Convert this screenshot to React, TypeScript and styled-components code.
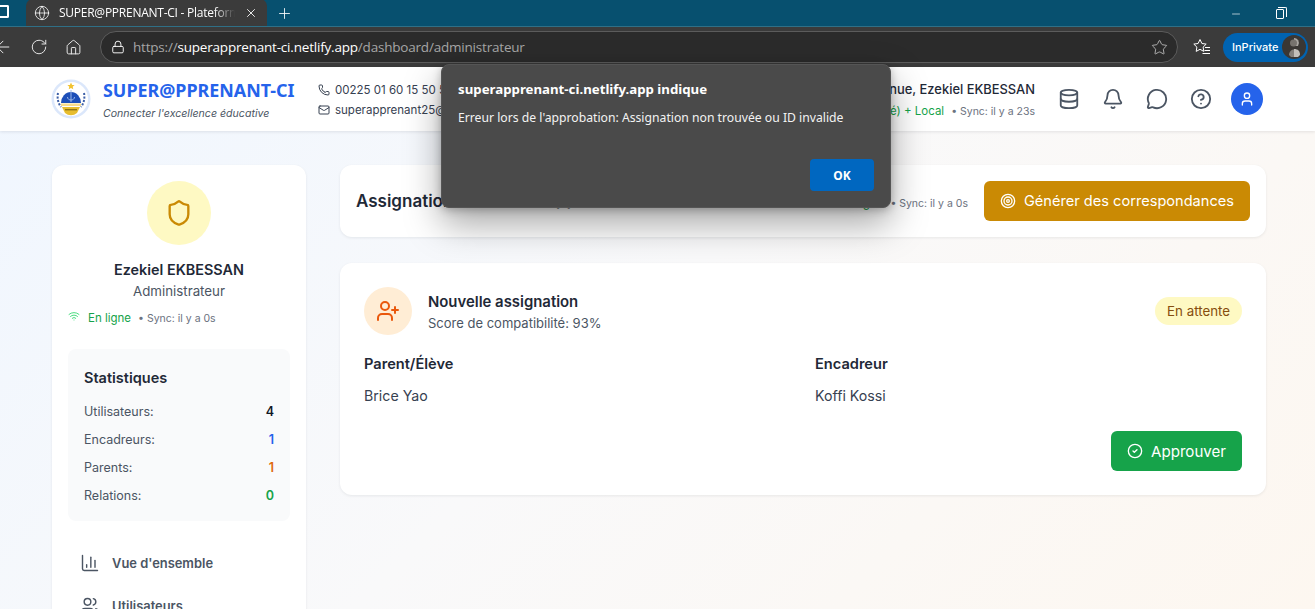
import styled, { createGlobalStyle } from "styled-components";
import {
  ArrowLeft,
  Bell,
  ChartColumn,
  CircleCheck,
  CircleHelp,
  Database,
  Globe,
  House,
  Lock,
  Mail,
  MessageCircle,
  Minus,
  Phone,
  Plus,
  RotateCw,
  Shield,
  Star,
  Target,
  User,
  UserPlus,
  Users,
  Wifi,
  X,
} from "lucide-react";

const GlobalStyle = createGlobalStyle`
  html, body {
    margin: 0;
    height: 100%;
    overflow: hidden;
  }
  * { box-sizing: border-box; }
  body {
    font-family: Inter, "Noto Sans", sans-serif;
    color: #1f2937;
  }
`;

const Screen = styled.div`
  position: relative;
  width: 1315px;
  height: 609px;
  overflow: hidden;
  display: flex;
  flex-direction: column;
  background: linear-gradient(135deg, #eff6ff 0%, #f9f9fa 50%, #fdf7f0 100%);
`;

/* browser chrome */
const TabStrip = styled.div`
  height: 27px;
  flex: none;
  display: flex;
  align-items: flex-end;
  background: #07506f;
  color: #fff;
  border-bottom: 1px solid #2f6f86;
`;

const WindowIcon = styled.div`
  width: 9px;
  height: 13px;
  margin-top: -3px;
  align-self: center;
  border: 2px solid #fff;
  border-left: none;
  border-radius: 0 2px 2px 0;
`;

const Tab = styled.div`
  width: 241px;
  height: 27px;
  margin-left: 17px;
  padding: 0 9px 0 8px;
  display: flex;
  align-items: center;
  gap: 9px;
  background: #3b3b3b;
  border-radius: 7px 7px 0 0;
  font-size: 12px;
  white-space: nowrap;
`;

const TabTitle = styled.span`
  flex: 1;
  overflow: hidden;
  letter-spacing: -0.25px;
  font-family: "Open Sans", sans-serif;
  mask-image: linear-gradient(90deg, #000 88%, transparent);
`;

const NewTab = styled.div`
  margin: 0 0 4px 9px;
  display: flex;
`;

const WindowControls = styled.div`
  margin-left: auto;
  padding: 0 31px 6px 0;
  display: flex;
  align-items: center;
  gap: 34px;
`;

const RestoreIcon = styled.div`
  position: relative;
  width: 8px;
  height: 10px;
  border: 1px solid #fff;
  border-radius: 1px;

  &::after {
    content: "";
    position: absolute;
    top: -3px;
    left: 1px;
    width: 8px;
    height: 9px;
    border-top: 1px solid #fff;
    border-right: 1px solid #fff;
    border-radius: 0 2px 0 0;
  }
`;

const Toolbar = styled.div`
  height: 40px;
  flex: none;
  display: flex;
  align-items: center;
  background: #3b3b3b;
  color: #e8e8e8;
`;

const NavButtons = styled.div`
  width: 107px;
  margin-left: -7px;
  display: flex;
  align-items: center;
  gap: 17px;
`;

const AddressBar = styled.div`
  width: 1078px;
  height: 32px;
  padding: 0 9px 0 7px;
  display: flex;
  align-items: center;
  gap: 5px;
  background: #2b2b2b;
  border: 1px solid #5c5c5c;
  border-radius: 16px;
  font-size: 13.5px;
  color: #a6a6a6;
  font-family: "Open Sans", sans-serif;
  letter-spacing: -0.2px;
`;

const LockBadge = styled.div`
  width: 20px;
  display: flex;
  justify-content: center;
  flex: none;
`;

const Host = styled.span`
  color: #fff;
`;

const AddressText = styled.div`
  flex: 1;
  white-space: nowrap;
`;

const FavoritesIcon = styled.div`
  margin-left: 14px;
  display: flex;
`;

const InPrivate = styled.div`
  width: 85px;
  height: 29px;
  margin-left: 11px;
  padding: 0 2px 0 9px;
  display: flex;
  align-items: center;
  justify-content: space-between;
  background: #0063b1;
  border-radius: 15px;
  font-size: 11px;
  font-weight: 500;
  color: #fff;
`;

const Avatar = styled.div`
  width: 24px;
  height: 24px;
  border-radius: 50%;
  background: #3a3734;
  display: flex;
`;

/* site header */
const SiteHeader = styled.header`
  height: 64px;
  flex: none;
  padding: 0 52px 0 51px;
  display: flex;
  align-items: center;
  background: #fff;
  box-shadow: 0 1px 3px rgba(15, 23, 42, 0.1);
`;

const Brand = styled.div`
  width: 267px;
  display: flex;
  align-items: center;
  gap: 12px;
`;

const BrandName = styled.div`
  font-size: 17.9px;
  line-height: 24px;
  font-weight: 700;
  color: #2563eb;
  font-family: "Noto Sans", sans-serif;
  white-space: nowrap;
`;

const Tagline = styled.div`
  margin-top: 4px;
  font-size: 10.6px;
  line-height: 15px;
  font-style: italic;
  color: #4b5563;
`;

const Contacts = styled.div`
  padding-top: 2px;
  display: flex;
  flex-direction: column;
  gap: 4px;
  font-size: 11.5px;
  color: #374151;
  white-space: nowrap;
`;

const ContactRow = styled.div`
  display: flex;
  align-items: center;
  gap: 5px;
  line-height: 16px;
`;

const HeaderRight = styled.div`
  margin-left: auto;
  display: flex;
  align-items: center;
  gap: 23px;
`;

const Welcome = styled.div`
  padding-top: 3px;
  display: flex;
  flex-direction: column;
  gap: 3px;
  text-align: right;
  white-space: nowrap;
`;

const WelcomeName = styled.div`
  font-size: 12.9px;
  line-height: 16px;
  font-weight: 500;
  color: #1f2937;
`;

const WelcomeStatus = styled.div`
  line-height: 16px;
`;

const HeaderIcons = styled.div`
  display: flex;
  align-items: center;
  gap: 22px;
  color: #4b5563;
`;

const UserBubble = styled.div`
  width: 32px;
  height: 32px;
  margin-left: -3px;
  border-radius: 50%;
  background: #2563eb;
  color: #fff;
  display: flex;
  align-items: center;
  justify-content: center;
`;

const Online = styled.span`
  font-size: 11.5px;
  color: #16a34a;
`;

const SyncText = styled.span`
  margin-left: 7px;
  font-size: 10.5px;
  color: #6b7280;
`;

/* page */
const Content = styled.main`
  flex: 1;
  min-height: 0;
  padding: 34px 49px 0 52px;
  display: grid;
  grid-template-columns: 254px 1fr;
  gap: 34px;
  align-items: start;
`;

const Sidebar = styled.aside`
  height: 520px;
  padding: 16px;
  background: #fff;
  border-radius: 12px;
  box-shadow: 0 1px 3px rgba(15, 23, 42, 0.08);
`;

const Profile = styled.div`
  display: flex;
  flex-direction: column;
  align-items: center;
`;

const ShieldCircle = styled.div`
  width: 64px;
  height: 64px;
  border-radius: 50%;
  background: #fef9c3;
  color: #ca8a04;
  display: flex;
  align-items: center;
  justify-content: center;
`;

const ProfileName = styled.div`
  margin-top: 15px;
  font-size: 14.4px;
  line-height: 20px;
  font-weight: 600;
  color: #1f2937;
`;

const ProfileRole = styled.div`
  margin-top: 1px;
  font-size: 13.3px;
  line-height: 20px;
  color: #4b5563;
`;

const StatusRow = styled.div`
  align-self: flex-start;
  width: 100%;
  height: 18px;
  margin-top: 6px;
  display: flex;
  align-items: center;
  gap: 8px;
`;

const StatsBox = styled.section`
  margin-top: 24px;
  height: 172px;
  padding: 17px 16px 16px;
  background: #f9fafb;
  border-radius: 8px;
`;

const StatsTitle = styled.div`
  font-size: 14.5px;
  line-height: 24px;
  font-weight: 600;
  color: #1f2937;
  margin-bottom: 7px;
`;

const StatRow = styled.div`
  height: 28px;
  display: flex;
  align-items: center;
  justify-content: space-between;
  font-size: 12.5px;
  color: #4b5563;
`;

const StatValue = styled.span<{ $color: string }>`
  font-weight: 600;
  color: ${(p) => p.$color};
`;

const NavList = styled.nav`
  margin-top: 32px;
  padding-left: 12px;
  display: flex;
  flex-direction: column;
  gap: 23px;
`;

const NavItem = styled.div`
  height: 20px;
  display: flex;
  align-items: center;
  gap: 12px;
  font-size: 12.9px;
  font-weight: 600;
  color: #4b5563;
`;

const Column = styled.div`
  display: flex;
  flex-direction: column;
  gap: 26px;
`;

const Card = styled.section`
  background: #fff;
  border-radius: 12px;
  box-shadow: 0 1px 3px rgba(15, 23, 42, 0.08);
`;

const TitleCard = styled(Card)`
  height: 72px;
  padding: 0 16px;
  display: flex;
  align-items: center;
`;

const PageTitle = styled.h1`
  margin: 0;
  font-size: 17px;
  font-weight: 600;
  color: #1f2937;
  white-space: nowrap;
`;

const TitleRight = styled.div`
  margin-left: auto;
  display: flex;
  align-items: center;
  gap: 16px;
`;

const ActionButton = styled.button<{ $color: string; $size: number }>`
  height: 40px;
  padding: 0 16px;
  display: flex;
  align-items: center;
  gap: 8px;
  border: none;
  border-radius: 6px;
  background: ${(p) => p.$color};
  color: #fff;
  font: inherit;
  font-size: ${(p) => p.$size}px;
  white-space: nowrap;
`;

const AssignmentCard = styled(Card)`
  height: 232px;
  padding: 24px;
  display: flex;
  flex-direction: column;
`;

const AssignmentHead = styled.div`
  display: flex;
  align-items: flex-start;
`;

const AddCircle = styled.div`
  width: 48px;
  height: 48px;
  border-radius: 50%;
  background: #ffedd5;
  color: #ea580c;
  display: flex;
  align-items: center;
  justify-content: center;
`;

const AssignmentText = styled.div`
  margin-left: 16px;
  padding-top: 3px;
`;

const AssignmentTitle = styled.div`
  font-size: 14.9px;
  line-height: 24px;
  font-weight: 600;
  color: #1f2937;
`;

const Score = styled.div`
  margin-top: -1px;
  font-size: 13px;
  line-height: 20px;
  color: #4b5563;
`;

const Badge = styled.div`
  margin: 10px 0 0 auto;
  height: 28px;
  padding: 0 12px;
  display: flex;
  align-items: center;
  border-radius: 14px;
  background: #fef9c3;
  color: #854d0e;
  font-size: 13.3px;
`;

const Parties = styled.div`
  margin-top: 17px;
  display: grid;
  grid-template-columns: 1fr 1fr;
  gap: 24px;
`;

const PartyLabel = styled.div`
  font-size: 14.6px;
  line-height: 24px;
  font-weight: 600;
  color: #1f2937;
`;

const PartyName = styled.div`
  margin-top: 8px;
  font-size: 14.2px;
  line-height: 24px;
  color: #374151;
`;

const CardFooter = styled.div`
  margin-top: auto;
  display: flex;
  justify-content: flex-end;
`;

/* browser alert */
const AlertDialog = styled.div`
  position: absolute;
  left: 441px;
  top: 64px;
  width: 450px;
  height: 144px;
  padding: 16px;
  background: #4a4a4a;
  border: 1px solid #555;
  border-radius: 8px;
  box-shadow: 0 16px 36px rgba(0, 0, 0, 0.35), 0 2px 8px rgba(0, 0, 0, 0.25);
  color: #fff;
  font-family: "Noto Sans", sans-serif;
  display: flex;
  flex-direction: column;
`;

const AlertTitle = styled.div`
  font-size: 13.25px;
  line-height: 16px;
  font-weight: 700;
`;

const AlertMessage = styled.div`
  margin-top: 12px;
  font-size: 12.2px;
  line-height: 18px;
  color: #f3f3f3;
`;

const AlertOk = styled.button`
  align-self: flex-end;
  margin: auto 0 0;
  width: 64px;
  height: 32px;
  border: none;
  border-radius: 4px;
  background: #0067c0;
  color: #fff;
  font: inherit;
  font-size: 12px;
  font-weight: 700;
`;

const Logo = () => (
  <svg width="40" height="40" viewBox="0 0 40 40">
    <circle cx="20" cy="20" r="19.5" fill="#dbe7fb" />
    <circle cx="20" cy="20" r="17" fill="#fff" />
    <path d="M10 24a10 11 0 0 1 20 0z" fill="#1d4fb8" />
    <path d="M20 11v12M16.5 18c0 4 7 4 7 0" stroke="#9db8e8" strokeWidth="1" fill="none" />
    <path d="M20 3.500l1.100 2.400 2.500.2-1.900 1.700.6 2.500-2.300-1.300-2.300 1.300.6-2.500-1.900-1.700 2.500-.2z" fill="#f2c230" />
    <path d="M7 14c-1 5 0 10 3 14M33 14c1 5 0 10-3 14" stroke="#3c5fa8" strokeWidth="2" strokeDasharray="2 1.500" fill="none" />
    <rect x="10" y="24.500" width="20" height="2.500" fill="#f8dc8c" />
    <path d="M11 28h18l-3 6a9 9 0 0 1-12 0z" fill="#e7bd2f" />
    <rect x="14" y="30" width="12" height="1.400" fill="#8f7414" />
  </svg>
);

const FavoritesGlyph = () => (
  <svg width="20" height="20" viewBox="0 0 20 20" fill="none" stroke="#fff" strokeWidth="1">
    <path d="M8 2.500l1.900 4 4.300.6-3.100 3 .7 4.300L8 12.300l-3.800 2.100.7-4.300-3.100-3 4.300-.6z" />
    <path d="M13 10.500h5M12.500 13.500h5.500M10.500 16.500h7.500" />
  </svg>
);

const AvatarGlyph = () => (
  <svg width="24" height="24" viewBox="0 0 24 24">
    <path d="M12 3a4.500 5 0 0 1 4 8h-4z" fill="#a8a5a0" />
    <path d="M12 14c4 0 6 2 6 6l-2 2h-4z" fill="#c2bfba" />
    <circle cx="11.500" cy="8" r="3.500" fill="#77736e" />
    <path d="M7 20c0-3 2-5.500 5-5.500V22H9z" fill="#85817c" />
  </svg>
);

function OnlineStatus({ label }: { label: string }) {
  return (
    <div>
      <Online>{label}</Online>
      <SyncText>• Sync: il y a 0s</SyncText>
    </div>
  );
}

export default function App() {
  return (
    <Screen>
      <GlobalStyle />
      <TabStrip>
        <WindowIcon />
        <Tab>
          <Globe size={16} strokeWidth={1.2} />
          <TabTitle>SUPER@PPRENANT-CI - Plateforme</TabTitle>
          <X size={14} strokeWidth={1.5} />
        </Tab>
        <NewTab>
          <Plus size={17} strokeWidth={1.2} />
        </NewTab>
        <WindowControls>
          <Minus size={12} strokeWidth={1.3} />
          <RestoreIcon />
        </WindowControls>
      </TabStrip>
      <Toolbar>
        <NavButtons>
          <ArrowLeft size={20} strokeWidth={1.2} />
          <RotateCw size={18} strokeWidth={1.3} />
          <House size={17} strokeWidth={1.4} />
        </NavButtons>
        <AddressBar>
          <LockBadge>
            <Lock size={14} strokeWidth={1.6} color="#fff" />
          </LockBadge>
          <AddressText>
            https://<Host>superapprenant-ci.netlify.app</Host>/dashboard/administrateur
          </AddressText>
          <Star size={17} strokeWidth={1.1} color="#cfcfcf" />
        </AddressBar>
        <FavoritesIcon>
          <FavoritesGlyph />
        </FavoritesIcon>
        <InPrivate>
          InPrivate
          <Avatar>
            <AvatarGlyph />
          </Avatar>
        </InPrivate>
      </Toolbar>
      <SiteHeader>
        <Brand>
          <Logo />
          <div>
            <BrandName>SUPER@PPRENANT-CI</BrandName>
            <Tagline>Connecter l'excellence éducative</Tagline>
          </div>
        </Brand>
        <Contacts>
          <ContactRow>
            <Phone size={12} />
            00225 01 60 15 50 58
          </ContactRow>
          <ContactRow>
            <Mail size={12} />
            superapprenant25@gmail.com
          </ContactRow>
        </Contacts>
        <HeaderRight>
          <Welcome>
            <WelcomeName>Bienvenue, Ezekiel EKBESSAN</WelcomeName>
            <WelcomeStatus>
              <Online>(Connecté) + Local</Online>
              <SyncText>• Sync: il y a 23s</SyncText>
            </WelcomeStatus>
          </Welcome>
          <HeaderIcons>
            <Database size={22} />
            <Bell size={22} />
            <MessageCircle size={22} />
            <CircleHelp size={22} />
            <UserBubble>
              <User size={16} />
            </UserBubble>
          </HeaderIcons>
        </HeaderRight>
      </SiteHeader>
      <Content>
        <Sidebar>
          <Profile>
            <ShieldCircle>
              <Shield size={28} />
            </ShieldCircle>
            <ProfileName>Ezekiel EKBESSAN</ProfileName>
            <ProfileRole>Administrateur</ProfileRole>
            <StatusRow>
              <Wifi size={12} color="#4ade80" />
              <OnlineStatus label="En ligne" />
            </StatusRow>
          </Profile>
          <StatsBox>
            <StatsTitle>Statistiques</StatsTitle>
            <StatRow>
              Utilisateurs:<StatValue $color="#111827">4</StatValue>
            </StatRow>
            <StatRow>
              Encadreurs:<StatValue $color="#2563eb">1</StatValue>
            </StatRow>
            <StatRow>
              Parents:<StatValue $color="#e06a0a">1</StatValue>
            </StatRow>
            <StatRow>
              Relations:<StatValue $color="#16a34a">0</StatValue>
            </StatRow>
          </StatsBox>
          <NavList>
            <NavItem>
              <ChartColumn size={20} strokeWidth={1.7} />
              Vue d'ensemble
            </NavItem>
            <NavItem>
              <Users size={20} strokeWidth={1.7} />
              Utilisateurs
            </NavItem>
          </NavList>
        </Sidebar>
        <Column>
          <TitleCard>
            <PageTitle>Assignations en attente (1)</PageTitle>
            <TitleRight>
              <OnlineStatus label="En ligne" />
              <ActionButton $color="#ca8a04" $size={14.6}>
                <Target size={16} />
                Générer des correspondances
              </ActionButton>
            </TitleRight>
          </TitleCard>
          <AssignmentCard>
            <AssignmentHead>
              <AddCircle>
                <UserPlus size={24} />
              </AddCircle>
              <AssignmentText>
                <AssignmentTitle>Nouvelle assignation</AssignmentTitle>
                <Score>Score de compatibilité: 93%</Score>
              </AssignmentText>
              <Badge>En attente</Badge>
            </AssignmentHead>
            <Parties>
              <div>
                <PartyLabel>Parent/Élève</PartyLabel>
                <PartyName>Brice Yao</PartyName>
              </div>
              <div>
                <PartyLabel>Encadreur</PartyLabel>
                <PartyName>Koffi Kossi</PartyName>
              </div>
            </Parties>
            <CardFooter>
              <ActionButton $color="#16a34a" $size={15.1}>
                <CircleCheck size={16} />
                Approuver
              </ActionButton>
            </CardFooter>
          </AssignmentCard>
        </Column>
      </Content>
      <AlertDialog role="alertdialog">
        <AlertTitle>superapprenant-ci.netlify.app indique</AlertTitle>
        <AlertMessage>Erreur lors de l'approbation: Assignation non trouvée ou ID invalide</AlertMessage>
        <AlertOk>OK</AlertOk>
      </AlertDialog>
    </Screen>
  );
}
